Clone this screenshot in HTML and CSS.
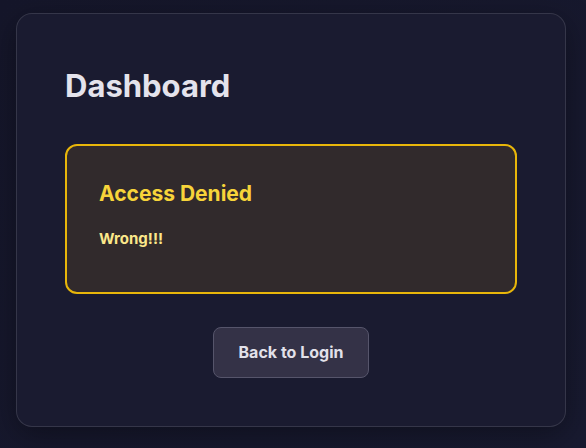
FILE: index.html
```html
<!DOCTYPE html>
<html lang="en">
<head>
  <meta charset="UTF-8" />
  <title>Dashboard</title>
  <link rel="stylesheet" href="styles.css">
</head>
<body>
  <div class="card">
    <h1 class="title">Dashboard</h1>

    <!-- Error box -->
    <div class="alert">
      <h2 class="alert-title">Access Denied</h2>
      <p class="alert-text">Wrong!!!</p>
    </div>

    <div class="actions">
      <button class="btn">Back to Login</button>
    </div>
  </div>
</body>
</html>
```

FILE: styles.css
```css
body {
  margin: 0;
  min-height: 448px;
  box-sizing: border-box;
  padding: 13px 20px 0 16px;
  font-family: 'Inter', 'Liberation Sans', Arial, sans-serif;
  background: linear-gradient(135deg, #15162a, #181a30);
}

.card {
  width: 550px;
  box-sizing: border-box;
  padding: 48px;
  background: #1a1b30;
  border: 1px solid rgba(255, 255, 255, 0.12);
  border-radius: 16px;
  box-shadow: 0 8px 30px rgba(0, 0, 0, 0.35);
}

.title {
  margin: 5px 0 39px;
  font-size: 31px;
  line-height: 38px;
  font-weight: 700;
  color: #e4e3ec;
}

.alert {
  padding: 35px 32px 32px;
  background: #312a2c;
  border: 2px solid #e8b60a;
  border-radius: 12px;
}

.alert-title {
  margin: 0 0 21px;
  font-size: 21px;
  line-height: 1.25;
  font-weight: 700;
  color: #f7d43a;
}

.alert-text {
  margin: 0 0 9px;
  font-size: 15px;
  line-height: 1.5;
  font-weight: 700;
  color: #fbe78a;
}

.actions {
  display: flex;
  justify-content: center;
  margin-top: 33px;
}

.btn {
  padding: 16px 25px;
  font-family: inherit;
  font-size: 16px;
  line-height: 17px;
  font-weight: 700;
  color: #e2e1ea;
  background: #343247;
  border: 1px solid #56556b;
  border-radius: 8px;
}
```
